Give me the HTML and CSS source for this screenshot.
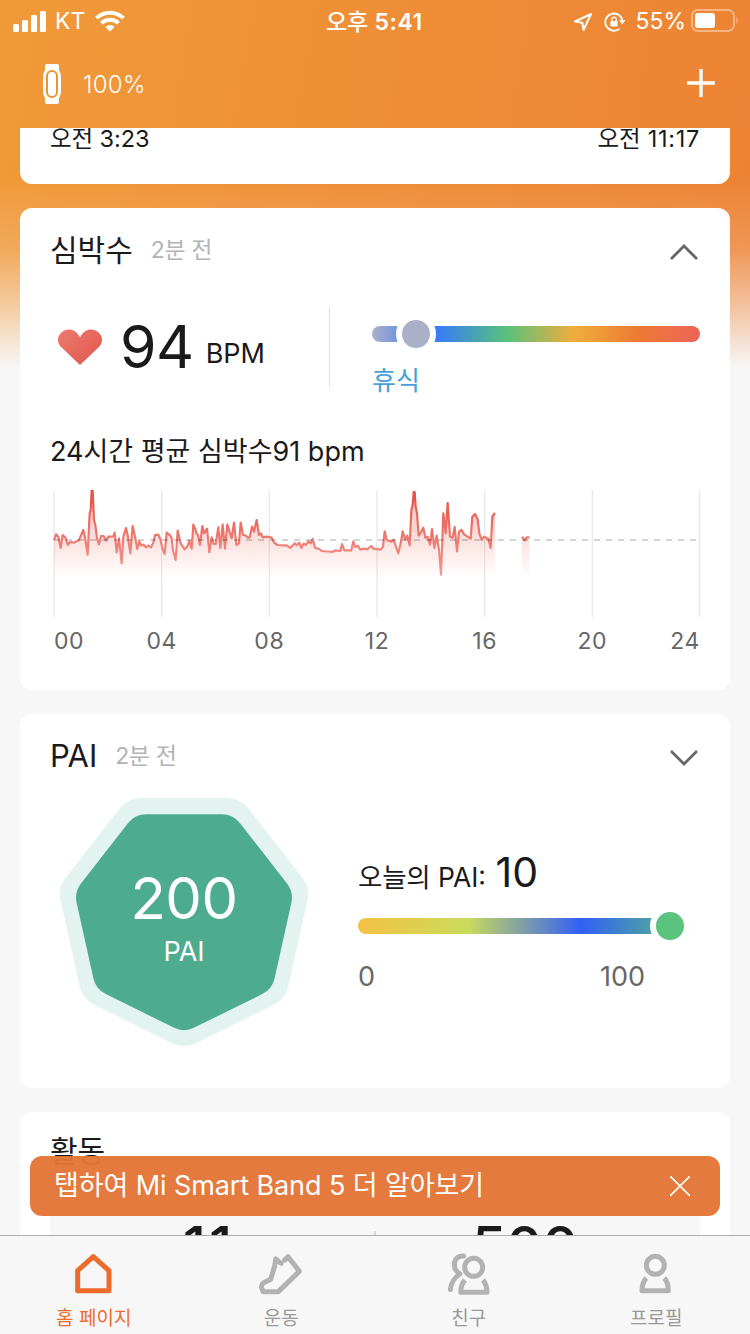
FILE: index.html
```html
<!DOCTYPE html>
<html lang="ko">

<head>
    <meta charset="UTF-8">
    <meta name="viewport" content="width=device-width, initial-scale=1.0">
    <title>홈 페이지</title>
    <link rel="stylesheet" href="styles.css">
</head>

<body>
    <header class="header">
        <div class="status">
            <div class="status-left">
                <svg class="signal" width="33" height="21" viewBox="0 0 33 21" fill="#fff">
                    <rect x="0" y="13" width="6" height="8" rx="1.5" />
                    <rect x="9" y="9" width="6" height="12" rx="1.5" />
                    <rect x="18" y="4" width="6" height="17" rx="1.5" />
                    <rect x="27" y="0" width="6" height="21" rx="1.5" />
                </svg>
                <span class="carrier">KT</span>
                <svg class="wifi" width="30" height="22" viewBox="0 0 30 22" fill="none" stroke="#fff" stroke-width="4">
                    <path d="M1.5 8.2 a19.2 19.2 0 0 1 27 0" />
                    <path d="M6.4 13.2 a12.2 12.2 0 0 1 17.2 0" />
                    <path d="M15 21.5 L10.4 16.9 a6.5 6.5 0 0 1 9.2 0 z" fill="#fff" stroke="none" />
                </svg>
            </div>
            <div class="time"><span class="ko">오후</span> 5:41</div>
            <div class="status-right">
                <svg class="location" width="20" height="20" viewBox="0 0 20 20" fill="none" stroke="#fff" stroke-width="2" stroke-linejoin="round">
                    <path d="M18 2 L2 9.5 L9.3 10.7 L10.5 18 z" />
                </svg>
                <svg class="lock" width="22" height="20" viewBox="0 0 22 20" fill="none" stroke="#fff" stroke-width="1.8">
                    <path d="M15.6 16.6 A8.6 8.6 0 1 1 18.4 8.6" />
                    <path d="M15 8 H21.4 L18.2 12.6 z" fill="#fff" stroke="none" />
                    <rect x="6.4" y="9" width="7.2" height="5.6" rx="1" fill="#fff" stroke="none" />
                    <path d="M7.8 9.4 V7.4 a2.2 2.2 0 0 1 4.4 0 V9.4" stroke-width="1.4" />
                </svg>
                <span class="percent">55%</span>
                <svg class="battery" width="48" height="24" viewBox="0 0 48 24">
                    <rect x="1" y="1" width="42" height="21" rx="6" fill="none" stroke="#fff" stroke-opacity=".4" stroke-width="2" />
                    <rect x="4" y="4" width="20" height="15" rx="3" fill="#fff" />
                    <path d="M45.5 8 q2.5 3.5 0 7 z" fill="#fff" fill-opacity=".5" />
                </svg>
            </div>
        </div>
        <div class="nav">
            <svg class="band" width="18" height="40" viewBox="0 0 18 40">
                <path d="M2 2 Q2 0 4 0 H14 Q16 0 16 2 V6 Q18 9 18 13 V27 Q18 31 16 34 V38 Q16 40 14 40 H4 Q2 40 2 38 V34 Q0 31 0 27 V13 Q0 9 2 6 z" fill="#fff" />
                <rect x="4" y="7" width="10" height="26" rx="5" fill="#fff" stroke="#ef9338" stroke-width="2" />
            </svg>
            <span class="band-level">100%</span>
            <svg class="plus" width="28" height="28" viewBox="0 0 28 28" stroke="#fff" stroke-width="3.4">
                <path d="M14 0 V28 M0 14 H28" />
            </svg>
        </div>
    </header>

    <main class="content">
        <section class="card card-sleep">
            <span><span class="ko">오전</span> 3:23</span>
            <span class="wake"><span class="ko">오전</span> 11:17</span>
        </section>

        <section class="card card-heart">
            <div class="card-title">
                <h2>심박수</h2>
                <span class="ago">2분 전</span>
                <svg class="chevron" width="30" height="18" viewBox="0 0 30 18" fill="none" stroke="#666" stroke-width="2.8">
                    <path d="M2 16 L15 3 L28 16" />
                </svg>
            </div>
            <div class="heart-row">
                <div class="bpm">
                    <svg width="44" height="36" viewBox="0 0 44 36">
                        <defs>
                            <linearGradient id="heart" x1="0" y1="0" x2="1" y2="1">
                                <stop offset="0" stop-color="#ec7b70" />
                                <stop offset="1" stop-color="#e25549" />
                            </linearGradient>
                        </defs>
                        <path d="M22 36 L3.6 18.6 C-1.2 14 -1.2 7.6 3.4 3.4 C8.6 -1.4 18 -1 22 8.6 C26 -1 35.4 -1.4 40.6 3.4 C45.2 7.6 45.2 14 40.4 18.6 z" fill="url(#heart)" />
                    </svg>
                    <span class="bpm-value">94</span>
                    <span class="bpm-unit">BPM</span>
                </div>
                <div class="zone">
                    <div class="bar bar-heart"><i class="knob knob-heart"></i></div>
                    <span class="zone-name">휴식</span>
                </div>
            </div>
            <p class="average">24시간 평균 심박수91 bpm</p>
            <svg class="chart" width="654" height="130" viewBox="0 0 1962 390">
                <defs>
                    <linearGradient id="line" gradientUnits="userSpaceOnUse" x1="0" y1="0" x2="0" y2="260">
                        <stop offset="0" stop-color="#e64e41" />
                        <stop offset="1" stop-color="#f29c95" />
                    </linearGradient>
                    <linearGradient id="area" gradientUnits="userSpaceOnUse" x1="0" y1="0" x2="0" y2="262">
                        <stop offset="0" stop-color="#e8594c" stop-opacity=".42" />
                        <stop offset="1" stop-color="#e8594c" stop-opacity="0" />
                    </linearGradient>
                </defs>
                <path d="M12 0 V380 M335 0 V380 M658 0 V380 M981 0 V380 M1304 0 V380 M1627 0 V380 M1949 0 V380" stroke="#e8e8e8" stroke-width="4" />
                <path class="area" fill="url(#area)" d="" />
                <path class="line" fill="none" stroke="url(#line)" stroke-width="6.5" stroke-linejoin="round" d="" />
                <path d="M12 150 H1940" stroke="#000" stroke-opacity=".22" stroke-width="5" stroke-dasharray="18 18" />
            </svg>
            <div class="hours">
                <span>00</span><span>04</span><span>08</span><span>12</span><span>16</span><span>20</span><span>24</span>
            </div>
        </section>

        <section class="card card-pai">
            <div class="card-title">
                <h2 class="pai-title">PAI</h2>
                <span class="ago">2분 전</span>
                <svg class="chevron" width="30" height="18" viewBox="0 0 30 18" fill="none" stroke="#666" stroke-width="2.8">
                    <path d="M2 2 L15 15 L28 2" />
                </svg>
            </div>
            <div class="pai-row">
                <div class="badge">
                    <svg width="248" height="248" viewBox="0 0 248 248" stroke-linejoin="round">
                        <polygon points="124,220.7 201.6,182.4 220.8,96.4 167.1,27.4 80.9,27.4 27.2,96.4 46.4,182.4" fill="#e3f4f0" stroke="#e3f4f0" stroke-width="54.6" />
                        <polygon points="124,208.7 191.9,175.2 208.6,99.9 161.7,39.5 86.3,39.5 39.4,99.9 56.1,175.2" fill="#4eac8e" stroke="#4eac8e" stroke-width="46.6" />
                    </svg>
                    <div class="badge-text">
                        <span class="badge-value">200</span>
                        <span class="badge-unit">PAI</span>
                    </div>
                </div>
                <div class="today">
                    <p class="today-label"><span class="ko">오늘의</span> PAI: <span class="today-value">10</span></p>
                    <div class="bar bar-pai"><i class="knob knob-pai"></i></div>
                    <div class="scale"><span>0</span><span>100</span></div>
                </div>
            </div>
        </section>

        <section class="card card-activity">
            <h2>활동</h2>
            <div class="activity">
                <span class="count">11</span>
                <i class="divider"></i>
                <span class="goal">500</span>
            </div>
        </section>
    </main>

    <div class="toast">
        <span>탭하여 Mi Smart Band 5 더 알아보기</span>
        <svg width="20" height="20" viewBox="0 0 20 20" stroke="#fff" stroke-width="1.6">
            <path d="M0 0 L20 20 M20 0 L0 20" />
        </svg>
    </div>

    <nav class="tabs">
        <a class="tab active">
            <svg width="48" height="46" viewBox="0 0 144 138">
                <path d="M23 116 V56 L70 14 L117 56 V116 z" />
            </svg>
            홈 페이지
        </a>
        <a class="tab">
            <svg width="48" height="46" viewBox="0 0 144 138">
                <path d="M72 34 L56 21 L53 42 L41 82 L18 94 Q12 98 14 108 L18 119 H64 L127 58 L93 14 L83 24" stroke-linecap="round" />
            </svg>
            운동
        </a>
        <a class="tab">
            <svg width="48" height="46" viewBox="0 0 144 138">
                <circle cx="86" cy="46" r="27" />
                <path d="M60 84 Q47 98 47 121 H126 Q126 98 114 84" />
                <path d="M56 12 C38 10 28 24 28 38 C28 52 35 60 45 66 C29 76 18 92 16 113" stroke-linecap="round" />
            </svg>
            친구
        </a>
        <a class="tab">
            <svg width="48" height="46" viewBox="0 0 144 138">
                <circle cx="70" cy="40" r="27" />
                <path d="M43 78 Q30 92 30 116 H109 Q109 92 97 78" />
            </svg>
            프로필
        </a>
    </nav>

    <script>
        // heart rate samples as x,y pairs, one list per measured stretch
        const samples = [
            [12,150, 18,133, 25,140, 32,174, 38,135, 46,142, 53,165, 60,156, 73,158, 87,150, 92,138, 100,120, 105,142, 113,194,
             119,70, 122,60, 125,2, 128,2, 132,90, 136,105, 141,145, 147,163, 153,138, 161,138, 168,152, 175,140, 190,139, 194,128,
             200,187, 207,145, 215,220, 220,140, 228,114, 233,135, 241,190, 248,108, 254,135, 262,177, 268,154, 273,166, 281,164,
             288,172, 295,167, 303,172, 310,158, 315,135, 325,134, 331,148, 337,174, 344,192, 350,128, 360,136, 365,145, 369,182,
             377,210, 383,122, 392,160, 404,178, 413,168, 418,152, 425,176, 430,104, 436,118, 440,132, 444,135, 450,165, 457,108,
             462,130, 471,116, 478,187, 485,142, 491,162, 497,162, 505,112, 511,174, 518,104, 525,176, 532,104, 545,145, 552,98,
             559,165, 567,160, 572,98, 579,134, 588,137, 593,143, 599,142, 606,110, 612,125, 620,90, 627,135, 633,130, 638,142,
             650,140, 665,143, 672,158, 682,165, 712,167, 721,174, 734,160, 740,166, 748,158, 754,174, 761,161, 768,165, 775,154,
             782,160, 788,147, 795,173, 808,177, 815,183, 848,186, 855,181, 871,183, 876,162, 883,181, 904,181, 910,154, 916,171,
             924,167, 930,178, 944,176, 951,178, 964,168, 970,176, 992,179, 999,170, 1004,124, 1010,150, 1025,155, 1031,149,
             1038,170, 1045,190, 1052,160, 1058,124, 1065,148, 1072,137, 1079,166, 1084,60, 1088,45, 1091,6, 1094,6, 1097,50,
             1101,70, 1106,137, 1113,127, 1120,113, 1126,143, 1133,140, 1140,164, 1146,117, 1153,174, 1160,137, 1167,180, 1173,254,
             1180,70, 1187,130, 1193,39, 1200,140, 1208,143, 1214,111, 1221,184, 1227,126, 1234,119, 1243,134, 1262,146, 1267,80,
             1275,72, 1283,88, 1288,130, 1295,150, 1302,140, 1315,146, 1322,174, 1327,80, 1335,69],
            [1416,140, 1424,151, 1430,142, 1438,142]
        ];

        let line = '';
        let area = '';
        samples.forEach(function (s) {
            line += 'M' + s.join(' ');
            area += 'M' + s.join(' ') + ' V262 H' + s[0] + ' z';
        });
        document.querySelector('.line').setAttribute('d', line);
        document.querySelector('.area').setAttribute('d', area);
    </script>
</body>

</html>
```
FILE: styles.css
```css
* {
    box-sizing: border-box;
}

body {
    margin: 0;
    width: 750px;
    height: 1334px;
    display: flex;
    flex-direction: column;
    position: relative;
    overflow: hidden;
    font-family: Inter, "Noto Sans CJK KR", sans-serif;
    color: #1a1a1a;
    background:
        linear-gradient(to bottom, rgba(247, 247, 247, 0) 180px, rgba(247, 247, 247, .18) 250px, rgba(247, 247, 247, .5) 300px, #f7f7f7 368px),
        linear-gradient(100deg, #f09a39 0, #ed8434 75%, #ec7c32 100%);
}

h2, p {
    margin: 0;
    font-weight: 400;
}

svg {
    flex: none;
    display: block;
}

.ko {
    letter-spacing: -0.2px;
}

/* header */
.header {
    flex: none;
    height: 128px;
    color: #fff;
}

.status {
    height: 40px;
    display: grid;
    grid-template-columns: 1fr auto 1fr;
    align-items: center;
    padding: 0 11px 0 13px;
    font-size: 23px;
}

.status-left, .status-right {
    display: flex;
    align-items: center;
}

.status-right {
    justify-content: flex-end;
}

.carrier {
    margin: 0 10px 0 9px;
}

.time {
    padding: 0 3px 2px 0;
    font-weight: 600;
    letter-spacing: 0.6px;
}

.time .ko {
    font-weight: 500;
}

.location {
    margin-top: 1px;
}

.lock {
    margin: 1px 9px 0 11px;
}

.percent {
    margin-right: 5px;
    font-size: 23px;
    line-height: 42px;
}

.nav {
    height: 88px;
    display: flex;
    align-items: center;
    padding: 0 35px 2px 43px;
}

.band {
    margin-top: 2px;
}

.band-level {
    flex: 1;
    margin: 3px 0 0 22px;
    font-size: 24px;
    font-weight: 300;
    letter-spacing: 0.3px;
}

/* cards */
.content {
    flex: 1;
    min-height: 0;
    overflow: hidden;
    display: flex;
    flex-direction: column;
    gap: 24px;
    padding: 0 20px;
}

.card {
    flex: none;
    background: #fff;
    border-radius: 12px;
    padding: 0 30px;
}

.card-sleep {
    height: 56px;
    display: flex;
    justify-content: space-between;
    border-radius: 0 0 12px 12px;
    font-size: 23.5px;
    line-height: 22px;
}

.wake {
    letter-spacing: 0.7px;
}

.card-heart {
    height: 482px;
}

.card-pai {
    height: 374px;
}

.card-title {
    height: 84px;
    display: flex;
    align-items: center;
}

.card h2 {
    font-size: 30px;
    line-height: 44px;
}

.card h2.pai-title {
    font-size: 31px;
}

.ago {
    flex: 1;
    margin: -4px 0 0 18px;
    font-size: 23px;
    letter-spacing: -0.4px;
    color: #b3b3b3;
}

.chevron {
    margin: 4px 1px 0 0;
}

/* heart rate */
.heart-row {
    height: 110px;
    display: flex;
    padding-top: 15px;
}

.bpm {
    width: 280px;
    height: 80px;
    display: flex;
    align-items: center;
    padding-left: 8px;
    border-right: 1px solid #e0e0e0;
}

.bpm-value {
    margin-left: 18px;
    font-size: 59px;
    line-height: 80px;
    letter-spacing: -0.5px;
}

.bpm-unit {
    margin: 13px 0 0 12px;
    font-size: 27px;
}

.zone {
    flex: 1;
    margin-left: 42px;
    padding-top: 19px;
}

.bar {
    position: relative;
    height: 16px;
    border-radius: 8px;
}

.bar-heart {
    width: 328px;
    background: linear-gradient(to right, #abb0c8 0, #7797dc 24px, #377cf6 66px, #58c17c 134px, #f1ad3d 202px, #ec7c31 264px, #ec6459 328px);
}

.knob {
    position: absolute;
    top: -12px;
    width: 40px;
    height: 40px;
    border: 6px solid #fff;
    border-radius: 50%;
}

.knob-heart {
    left: 24px;
    background: #abb0c8;
}

.zone-name {
    display: block;
    margin-top: 21px;
    font-size: 26px;
    line-height: 36px;
    color: #459fd9;
}

.average {
    margin-top: 30px;
    font-size: 27px;
    line-height: 40px;
}

.chart {
    margin-top: 18px;
}

.hours {
    display: grid;
    grid-template-columns: 1fr repeat(5, 2fr) 1fr;
    margin: 6px 0 0 4px;
    font-size: 23px;
    line-height: 30px;
    letter-spacing: 0.6px;
    text-align: center;
    color: #666;
}

.hours span:first-child {
    text-align: left;
}

.hours span:last-child {
    text-align: right;
}

/* PAI */
.pai-row {
    display: flex;
    padding-left: 10px;
}

.badge {
    display: grid;
}

.badge svg, .badge-text {
    grid-area: 1 / 1;
}

.badge-text {
    display: flex;
    flex-direction: column;
    align-items: center;
    padding-top: 65px;
    color: #fff;
}

.badge-value {
    font-size: 58px;
    font-weight: 400;
    line-height: 71px;
    letter-spacing: -0.5px;
}

.badge-unit {
    font-size: 27px;
    line-height: 35px;
    font-weight: 400;
}

.today {
    width: 332px;
    margin-left: 50px;
    padding-top: 48px;
}

.today-label {
    height: 52px;
    font-size: 26.5px;
    line-height: 52px;
}

.today-value {
    margin-left: 2px;
    font-size: 41px;
}

.bar-pai {
    margin-top: 20px;
    background: linear-gradient(to right, #f5c243 0, #cadb5c 110px, #3260f6 222px, #58c17c 332px);
}

.knob-pai {
    right: 0;
    background: #5ac37e;
}

.scale {
    display: flex;
    justify-content: space-between;
    margin: 25px 45px 0 0;
    font-size: 27px;
    line-height: 36px;
    color: #666;
}

/* activity */
.card-activity {
    height: 300px;
    padding-top: 17px;
}

.activity {
    height: 200px;
    margin-top: 29px;
    padding-top: 17px;
    display: flex;
    background: #f7f7f7;
}

.activity span {
    width: 324px;
    font-size: 56px;
    font-weight: 500;
    line-height: 56px;
    text-align: center;
}

.activity .count {
    padding-right: 6px;
    letter-spacing: 3px;
}

.activity .goal {
    padding-right: 26px;
}

.divider {
    width: 2px;
    height: 60px;
    margin-top: 12px;
    background: #d8d8d8;
}

.toast {
    position: absolute;
    left: 30px;
    top: 1156px;
    width: 690px;
    height: 60px;
    display: flex;
    align-items: center;
    justify-content: space-between;
    padding: 0 30px 0 24px;
    border-radius: 12px;
    background: rgba(227, 117, 53, .96);
    color: #fff;
    font-size: 27px;
    line-height: 60px;
    letter-spacing: -0.1px;
}

/* tab bar */
.tabs {
    flex: none;
    height: 99px;
    display: flex;
    border-top: 1px solid #adadad;
    background: #f7f7f7;
}

.tab {
    flex: 1;
    display: flex;
    flex-direction: column;
    align-items: center;
    padding-top: 16px;
    font-size: 19px;
    line-height: 42px;
    color: #999;
}

.tab svg {
    fill: none;
    stroke: #b2b2b2;
    stroke-width: 15px;
    stroke-linejoin: round;
}

.tab.active {
    color: #ee6c2b;
}

.tab.active svg {
    stroke: #ee6c2b;
}
```
